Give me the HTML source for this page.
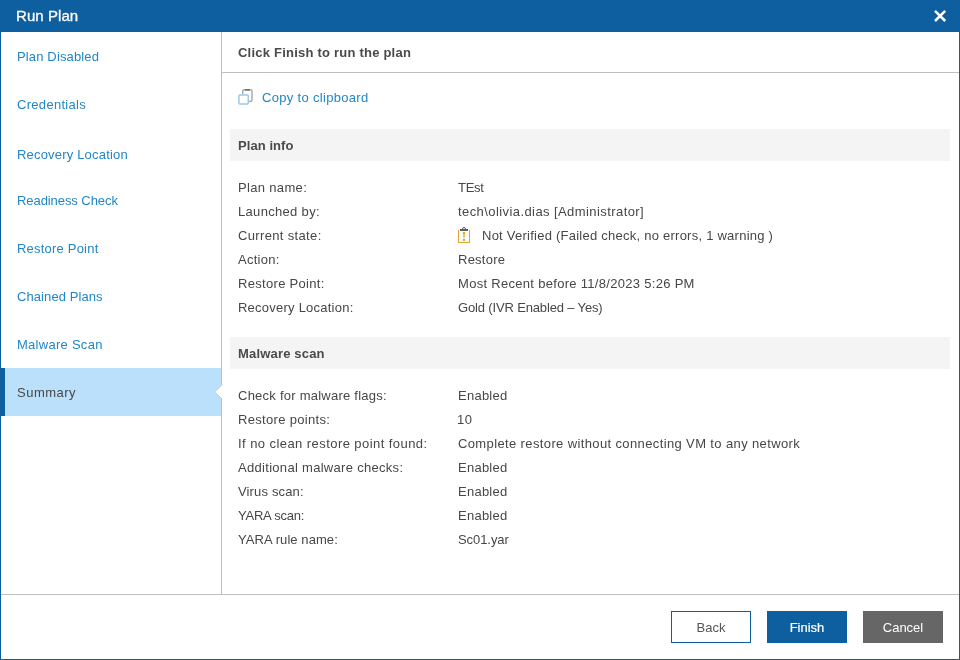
<!DOCTYPE html>
<html><head><meta charset="utf-8">
<style>
*{margin:0;padding:0;box-sizing:border-box;}
html,body{width:960px;height:660px;overflow:hidden;background:#fff;}
body{font-family:"Liberation Sans",sans-serif;position:relative;color:#3d3d3d;}
.t{position:absolute;white-space:nowrap;line-height:16px;will-change:transform;}
#title{position:absolute;left:0;top:0;width:960px;height:32px;background:#0e5fa0;}
#bl{position:absolute;left:0;top:32px;width:1px;height:628px;background:#0e5fa0;}
#br{position:absolute;right:0;top:32px;width:1px;height:628px;background:#0e5fa0;}
#bb{position:absolute;left:0;bottom:0;width:960px;height:1px;background:#0e5fa0;}
#vsep{position:absolute;left:221px;top:32px;width:1px;height:562px;background:#bfbfbf;}
#sel{position:absolute;left:1px;top:368px;width:220px;height:48px;background:#bbe0fb;}
#selbar{position:absolute;left:1px;top:368px;width:4px;height:48px;background:#0e5fa0;}
#hline{position:absolute;left:222px;top:72px;width:737px;height:1px;background:#bfbfbf;}
#fline{position:absolute;left:1px;top:594px;width:958px;height:1px;background:#bfbfbf;}
.band{position:absolute;left:230px;width:720px;height:32px;background:#f4f4f4;}
.btn{position:absolute;top:611px;width:80px;height:32px;font-size:13px;text-align:center;line-height:32px;padding-top:1px;will-change:transform;}
</style></head><body>
<div id="title">
<svg style="position:absolute;left:928px;top:4px" width="24" height="24" viewBox="0 0 24 24"><path d="M7 6.8L17.2 17M17.2 6.8L7 17" stroke="#fff" stroke-width="2.5"/></svg>
</div>
<div id="bl"></div><div id="br"></div><div id="bb"></div>
<div id="sel"></div><div id="selbar"></div>
<div id="vsep"></div>
<svg style="position:absolute;left:210px;top:380px" width="13" height="24" viewBox="0 0 13 24"><path d="M12 5.1L4.7 12L12 18.6Z" fill="#fff"/><path d="M11.6 5.1L4.9 12L11.6 18.6" fill="none" stroke="#c8c8c8" stroke-width="0.9"/></svg>
<div id="hline"></div>
<div class="band" style="top:129px"></div>
<div class="band" style="top:337px"></div>

<svg style="position:absolute;left:234px;top:85px" width="24" height="24" viewBox="0 0 24 24">
<path d="M8.7 9.3V6.2Q8.7 4.7 10.2 4.7H16.5Q18 4.7 18 6.2V14.9Q18 16.4 16.5 16.4H14.9" fill="none" stroke="#a6a6a6" stroke-width="1.4"/>
<path d="M10.9 4.9H16" stroke="#707070" stroke-width="1.6"/>
<rect x="4.9" y="10" width="9.4" height="9" rx="1" fill="none" stroke="#98c8ea" stroke-width="1.5"/>
</svg>

<svg style="position:absolute;left:450px;top:222px" width="30" height="26" viewBox="0 0 30 26">
<defs><linearGradient id="eg" x1="0" y1="0" x2="0" y2="1"><stop offset="0" stop-color="#dc9a14"/><stop offset="1" stop-color="#f0d090"/></linearGradient></defs>
<path d="M8.5 8V20.5H19.5V8" fill="none" stroke="#e2a52c" stroke-width="1.1"/>
<rect x="10" y="7" width="8" height="2" fill="#5c5c5c"/>
<path d="M12.5 7A1.5 1.5 0 0 1 15.5 7" fill="none" stroke="#5c5c5c" stroke-width="1"/>
<rect x="13" y="10" width="2" height="5.8" fill="url(#eg)"/>
<rect x="13" y="17" width="2" height="1.8" fill="#dc9a14"/>
</svg>

<div class="t" id="ttl" style="left:16.00px;top:8px;font-size:15px;color:#ffffff;-webkit-text-stroke:0.3px #fff;letter-spacing:0.071px;">Run Plan</div>
<div class="t" id="n1" style="left:17.00px;top:49px;font-size:13px;color:#2287c6;letter-spacing:0.146px;">Plan Disabled</div>
<div class="t" id="n2" style="left:17.00px;top:97px;font-size:13px;color:#2287c6;letter-spacing:0.300px;">Credentials</div>
<div class="t" id="n3" style="left:17.00px;top:147px;font-size:13px;color:#2287c6;letter-spacing:0.187px;">Recovery Location</div>
<div class="t" id="n4" style="left:17.00px;top:193px;font-size:13px;color:#2287c6;letter-spacing:-0.071px;">Readiness Check</div>
<div class="t" id="n5" style="left:17.00px;top:241px;font-size:13px;color:#2287c6;letter-spacing:0.208px;">Restore Point</div>
<div class="t" id="n6" style="left:17.00px;top:289px;font-size:13px;color:#2287c6;letter-spacing:0.083px;">Chained Plans</div>
<div class="t" id="n7" style="left:17.00px;top:337px;font-size:13px;color:#2287c6;letter-spacing:0.273px;">Malware Scan</div>
<div class="t" id="n8" style="left:17.00px;top:385px;font-size:13px;color:#474747;letter-spacing:0.500px;">Summary</div>
<div class="t" id="hdr" style="left:238.00px;top:45px;font-size:13px;color:#4a4a4a;font-weight:bold;letter-spacing:0.222px;">Click Finish to run the plan</div>
<div class="t" id="copy" style="left:261.50px;top:90px;font-size:13px;color:#2287c6;letter-spacing:0.313px;">Copy to clipboard</div>
<div class="t" id="sec1" style="left:237.50px;top:138px;font-size:13px;color:#4a4a4a;font-weight:bold;letter-spacing:0.062px;">Plan info</div>
<div class="t" id="sec2" style="left:237.50px;top:346px;font-size:13px;color:#4a4a4a;font-weight:bold;letter-spacing:0.182px;">Malware scan</div>
<div class="t" id="l1" style="left:237.50px;top:180px;font-size:13px;color:#474747;letter-spacing:0.333px;">Plan name:</div>
<div class="t" id="l2" style="left:237.50px;top:204px;font-size:13px;color:#474747;letter-spacing:0.318px;">Launched by:</div>
<div class="t" id="l3" style="left:237.50px;top:228px;font-size:13px;color:#474747;letter-spacing:0.346px;">Current state:</div>
<div class="t" id="l4" style="left:237.50px;top:252px;font-size:13px;color:#474747;letter-spacing:0.250px;">Action:</div>
<div class="t" id="l5" style="left:237.50px;top:276px;font-size:13px;color:#474747;letter-spacing:0.308px;">Restore Point:</div>
<div class="t" id="l6" style="left:237.50px;top:300px;font-size:13px;color:#474747;letter-spacing:0.235px;">Recovery Location:</div>
<div class="t" id="m1" style="left:237.50px;top:388px;font-size:13px;color:#474747;letter-spacing:0.239px;">Check for malware flags:</div>
<div class="t" id="m2" style="left:237.50px;top:412px;font-size:13px;color:#474747;letter-spacing:0.321px;">Restore points:</div>
<div class="t" id="m3" style="left:237.50px;top:436px;font-size:13px;color:#474747;letter-spacing:0.435px;">If no clean restore point found:</div>
<div class="t" id="m4" style="left:237.50px;top:460px;font-size:13px;color:#474747;letter-spacing:0.300px;">Additional malware checks:</div>
<div class="t" id="m5" style="left:237.50px;top:484px;font-size:13px;color:#474747;letter-spacing:0.150px;">Virus scan:</div>
<div class="t" id="m6" style="left:237.50px;top:508px;font-size:13px;color:#474747;letter-spacing:-0.222px;">YARA scan:</div>
<div class="t" id="m7" style="left:237.50px;top:532px;font-size:13px;color:#474747;letter-spacing:0.071px;">YARA rule name:</div>
<div class="t" id="v1" style="left:457.50px;top:180px;font-size:13px;color:#474747;letter-spacing:-0.300px;">TEst</div>
<div class="t" id="v2" style="left:457.50px;top:204px;font-size:13px;color:#474747;letter-spacing:0.419px;">tech\olivia.dias [Administrator]</div>
<div class="t" id="v3" style="left:481.50px;top:228px;font-size:13px;color:#474747;letter-spacing:0.245px;">Not Verified (Failed check, no errors, 1 warning )</div>
<div class="t" id="v4" style="left:457.50px;top:252px;font-size:13px;color:#474747;letter-spacing:0.250px;">Restore</div>
<div class="t" id="v5" style="left:457.50px;top:276px;font-size:13px;color:#474747;letter-spacing:0.300px;">Most Recent before 11/8/2023 5:26 PM</div>
<div class="t" id="v6" style="left:457.50px;top:300px;font-size:13px;color:#474747;letter-spacing:-0.152px;">Gold (IVR Enabled – Yes)</div>
<div class="t" id="w1" style="left:457.50px;top:388px;font-size:13px;color:#474747;letter-spacing:0.250px;">Enabled</div>
<div class="t" id="w2" style="left:457.00px;top:412px;font-size:13px;color:#474747;letter-spacing:0.500px;">10</div>
<div class="t" id="w3" style="left:457.50px;top:436px;font-size:13px;color:#474747;letter-spacing:0.375px;">Complete restore without connecting VM to any network</div>
<div class="t" id="w4" style="left:457.50px;top:460px;font-size:13px;color:#474747;letter-spacing:0.250px;">Enabled</div>
<div class="t" id="w5" style="left:457.50px;top:484px;font-size:13px;color:#474747;letter-spacing:0.250px;">Enabled</div>
<div class="t" id="w6" style="left:457.50px;top:508px;font-size:13px;color:#474747;letter-spacing:0.250px;">Enabled</div>
<div class="t" id="w7" style="left:457.50px;top:532px;font-size:13px;color:#474747;letter-spacing:-0.071px;">Sc01.yar</div>

<div id="fline"></div>
<div class="btn" style="left:671px;border:1px solid #0e5fa0;color:#555;background:#fff;line-height:30px">Back</div>
<div class="btn" style="left:767px;background:#0e5fa0;color:#fff;line-height:32px;-webkit-text-stroke:0.2px #fff">Finish</div>
<div class="btn" style="left:863px;background:#666;color:#fff;line-height:32px">Cancel</div>
</body></html>
